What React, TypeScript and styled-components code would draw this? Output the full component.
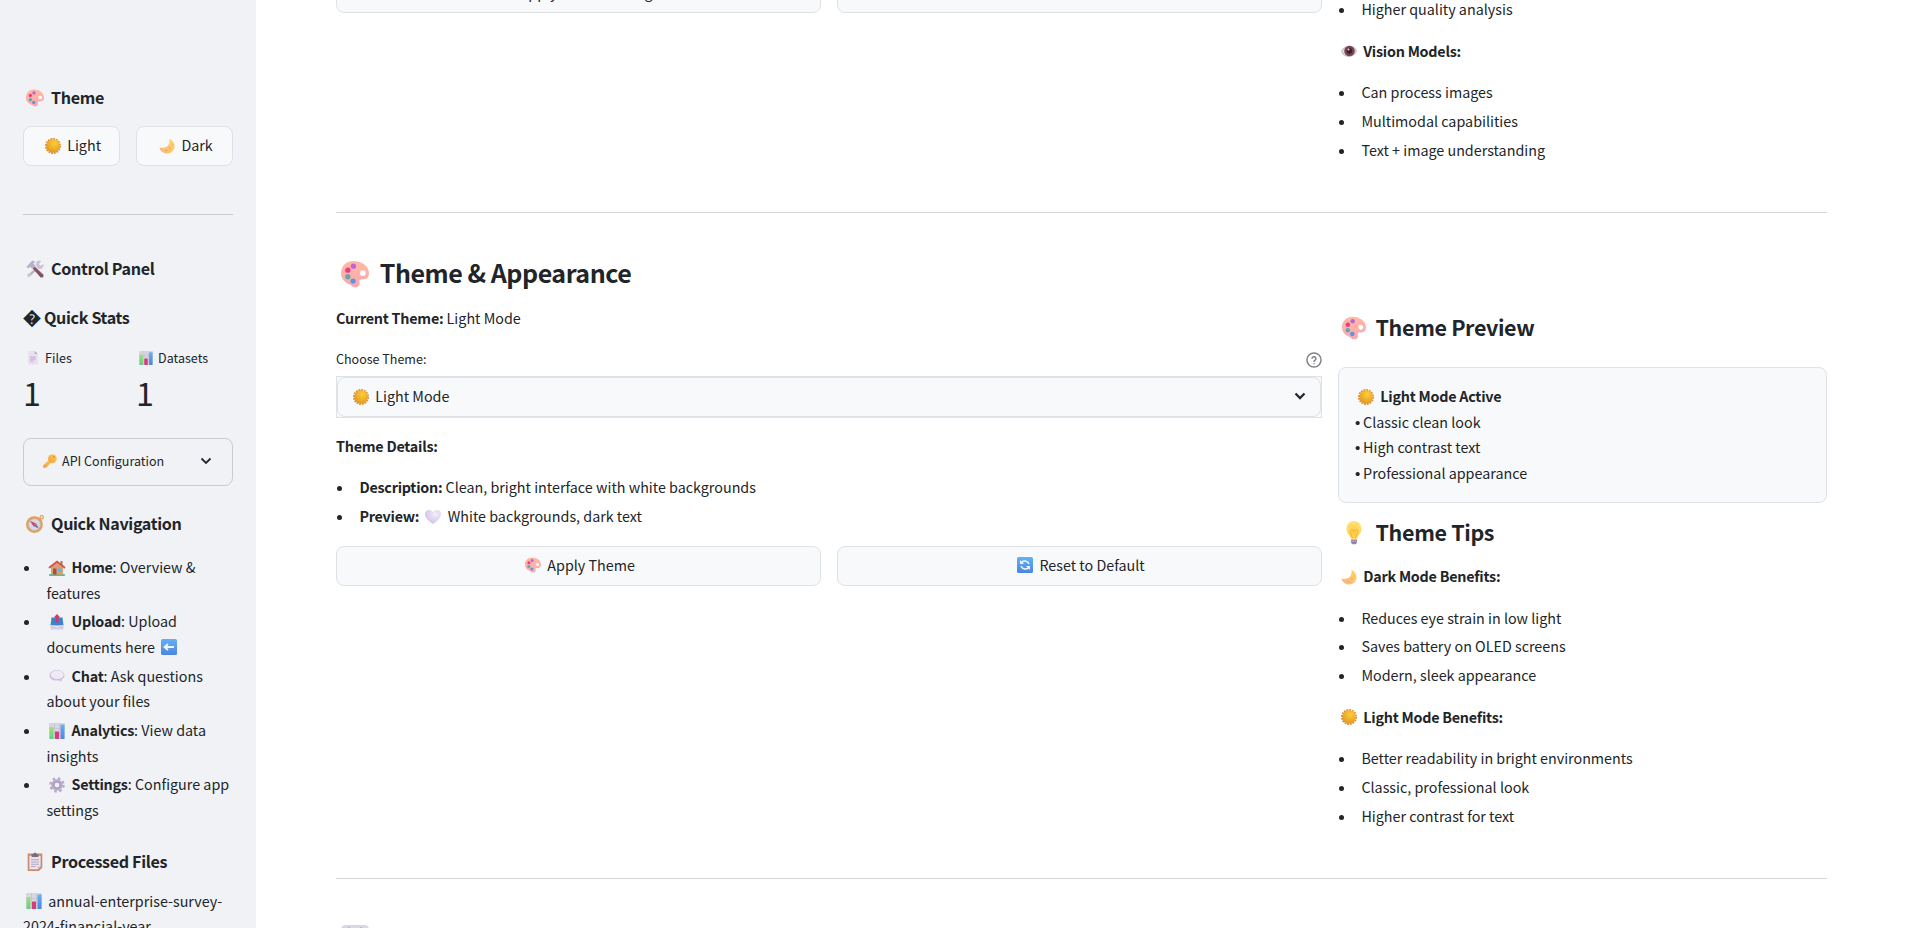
import React from 'react';
import styled, { createGlobalStyle, css } from 'styled-components';

const K = 0.8953;
const size = (px: number) => `${(px * K).toFixed(3)}px`;

const Global = createGlobalStyle`
  *, *::before, *::after { box-sizing: border-box; }
  html, body { margin: 0; padding: 0; height: 100%; overflow: hidden; background: #ffffff; }
  body {
    font-family: "Noto Sans CJK SC", "Noto Sans CJK JP", "Liberation Sans", sans-serif;
    font-size: ${size(16)};
    line-height: 25.6px;
    color: #212529;
  }
  h2, h3, h4, p, ul { margin: 0; padding: 0; font-weight: 400; }
  strong { font-weight: 600; letter-spacing: -0.016em; }
`;

const Page = styled.div`
  display: flex;
  width: 100%;
  height: 928px;
  overflow: hidden;
`;

const Sidebar = styled.aside`
  flex: 0 0 256px;
  height: 928px;
  padding: 85px 23px 0;
  overflow: hidden;
  background: #f0f2f6;
`;

const Main = styled.main`
  flex: 1;
  height: 928px;
  padding: 0 93px 0 80px;
  overflow: hidden;
`;

const Icon = styled.svg`
  display: inline-block;
  width: 1.117em;
  height: 1.117em;
  margin: 0 0.215em 0 0.205em;
  vertical-align: -0.18em;
  overflow: visible;
`;

const SideTitle = styled.h4<{ $top?: number }>`
  margin-top: ${(p) => p.$top ?? 0}px;
  height: 24px;
  font-size: ${size(18)};
  line-height: 24px;
  font-weight: 600;
  letter-spacing: -0.021em;
  white-space: nowrap;
`;

const Replacement = styled.span`
  font-size: 18px;
  line-height: 0;
`;

const Title = styled.h2`
  margin-top: 42px;
  height: 34px;
  font-size: ${size(28)};
  line-height: 34px;
  font-weight: 600;
  letter-spacing: -0.019em;
`;

const SubTitle = styled.h3<{ $top: number }>`
  margin-top: ${(p) => p.$top}px;
  height: 30px;
  font-size: ${size(24)};
  line-height: 30px;
  font-weight: 600;
  letter-spacing: -0.016em;
`;

const Text = styled.p<{ $top?: number }>`
  margin-top: ${(p) => p.$top ?? 0}px;
  line-height: 25.6px;
`;

const Rule = styled.hr<{ $top?: number }>`
  height: 1px;
  margin: ${(p) => p.$top ?? 0}px 0 0;
  border: 0;
  background: rgba(49, 51, 63, 0.2);
`;

const ButtonRow = styled.div<{ $top?: number }>`
  display: grid;
  grid-template-columns: 1fr 1fr;
  gap: 16px;
  margin-top: ${(p) => p.$top ?? 0}px;
`;

const Button = styled.button<{ $indent?: number }>`
  display: flex;
  align-items: center;
  justify-content: center;
  height: 40px;
  padding: 0 12px 2px ${(p) => 12 + (p.$indent ?? 0)}px;
  border: 1px solid #dee2e6;
  border-radius: 8px;
  background: #f8f9fb;
  color: inherit;
  font: inherit;
  line-height: 25.6px;
  white-space: nowrap;
`;

const Metrics = styled.div`
  display: grid;
  grid-template-columns: 1fr 1fr;
  gap: 16px;
  margin-top: 19px;
`;

const small = css`
  font-size: ${size(14)};
  line-height: 20px;
`;

const MetricLabel = styled.div`
  ${small}
  white-space: nowrap;
`;

const MetricValue = styled.div`
  margin-top: 2px;
  height: 44px;
  font-size: ${size(36)};
  line-height: 44px;
`;

const Expander = styled.div`
  ${small}
  display: flex;
  align-items: center;
  justify-content: space-between;
  height: 48px;
  margin-top: 24px;
  padding: 0 20px 2px 16px;
  border: 1px solid rgba(49, 51, 63, 0.2);
  border-radius: 8px;
`;

const List = styled.ul<{ $top?: number }>`
  display: flex;
  flex-direction: column;
  gap: 3.2px;
  margin-top: ${(p) => p.$top ?? 0}px;
  list-style: none;
`;

const Item = styled.li`
  display: grid;
  grid-template-columns: 23.4px 1fr;
  &::before {
    content: '';
    width: 5px;
    height: 5px;
    margin: 12px 0 0 1px;
    border-radius: 50%;
    background: #212529;
  }
`;

const Columns = styled.div<{ $top?: number }>`
  display: grid;
  grid-template-columns: 986px 489px;
  gap: 16px;
  margin-top: ${(p) => p.$top ?? 0}px;
`;

const TopColumns = styled(Columns)`
  height: 212px;
`;

const LabelRow = styled.div`
  ${small}
  display: flex;
  justify-content: space-between;
  align-items: flex-end;
  margin-top: 18px;
`;

const SelectFrame = styled.div`
  height: 42px;
  margin-top: 7px;
  border: 1px solid #dee2e6;
  background: #f8f9fb;
`;

const SelectInner = styled.div`
  display: flex;
  align-items: center;
  justify-content: space-between;
  height: 40px;
  padding: 0 14px 1px 12px;
  border: 1px solid #dee2e6;
  border-radius: 8px;
`;

const Card = styled.div`
  height: 136px;
  margin-top: 25px;
  padding: 15px 16px;
  border: 1px solid #dee2e6;
  border-radius: 8px;
  background: #f8f9fb;
`;

const Dot = styled.span`
  font-family: "Liberation Sans", sans-serif;
  font-size: 15px;
  line-height: 0;
  letter-spacing: -0.4px;
`;

const gradients = (
  <svg width="0" height="0" style={{ position: 'absolute' }} aria-hidden="true">
    <defs>
      <radialGradient id="gSun" cx=".6" cy=".3" r=".75"><stop offset="0" stopColor="#ffce33" /><stop offset="1" stopColor="#dd9528" /></radialGradient>
      <linearGradient id="gMoon" x1="1" y1="0" x2="0" y2="1"><stop offset="0" stopColor="#ffd65c" /><stop offset="1" stopColor="#f7b585" /></linearGradient>
      <linearGradient id="gPal" x1="0" y1="0" x2="0" y2="1"><stop offset="0" stopColor="#ffb9a2" /><stop offset="1" stopColor="#f9a9b0" /></linearGradient>
      <linearGradient id="gGreen" x1="0" y1="0" x2="0" y2="1"><stop offset="0" stopColor="#a5e06f" /><stop offset="1" stopColor="#5fd08c" /></linearGradient>
      <linearGradient id="gBlue" x1="0" y1="0" x2="0" y2="1"><stop offset="0" stopColor="#64b1f5" /><stop offset="1" stopColor="#4b86df" /></linearGradient>
      <linearGradient id="gPaper" x1="0" y1="0" x2="0" y2="1"><stop offset="0" stopColor="#e6e2ec" /><stop offset="1" stopColor="#eadcf3" /></linearGradient>
      <linearGradient id="gKey" x1="1" y1="0" x2="0" y2="1"><stop offset="0" stopColor="#ffd047" /><stop offset="1" stopColor="#f19a4c" /></linearGradient>
      <radialGradient id="gHeart" cx=".65" cy=".3" r=".8"><stop offset="0" stopColor="#f3effa" /><stop offset="1" stopColor="#cfb9e6" /></radialGradient>
      <radialGradient id="gBulb" cx=".5" cy=".6" r=".6"><stop offset="0" stopColor="#ffca3c" /><stop offset="1" stopColor="#ffe17b" /></radialGradient>
    </defs>
  </svg>
);

const art: Record<string, React.ReactNode> = {
  palette: (
    <>
      <path d="M14 1C6 1 0 7 0 15c0 7 5 11 10 13 3 1 2 3 6 3 5 0 6-3 5-6-.6-2 .5-3 3-3 4 0 8-1 8-7C32 7 24 1 14 1z" fill="url(#gPal)" />
      <circle cx="25" cy="15" r="3.2" fill="#fff" />
      <circle cx="14.200" cy="7" r="3" fill="#bd63dc" />
      <circle cx="7.800" cy="11.600" r="3" fill="#ea3c86" />
      <circle cx="7.800" cy="19" r="3" fill="#5fa9ac" />
      <circle cx="13.800" cy="24" r="3" fill="#6492de" />
    </>
  ),
  sun: (
    <>
      <circle cx="16" cy="16" r="14" fill="none" stroke="#e58b33" strokeWidth="4" strokeDasharray="3.6 1.9" />
      <circle cx="16" cy="16" r="13.700" fill="url(#gSun)" />
    </>
  ),
  moon: (
    <>
      <path d="M21 2c1 7-1 12-5 15-5 3.500-11 3-15 2 1 7 8 12 15 12 9 0 15-7 15-14C31 10 27 4 21 2z" fill="url(#gMoon)" />
      <circle cx="22" cy="20" r="1.500" fill="#e59c4d" /><circle cx="15" cy="25" r="1.600" fill="#e59c4d" /><circle cx="27" cy="14" r="1" fill="#e59c4d" />
    </>
  ),
  tools: (
    <>
      <path d="M17 14l-14 13 3 3 14-13z" fill="#b9b0c7" />
      <path d="M19 3c3-3 7-2 8-1l-4 5 3 3 5-3c1 5-2 9-7 9-5-1-8-7-5-13z" fill="#cbc3d8" />
      <path d="M5 23l4 4-4 4-4-4z" fill="#cfc7da" />
      <path d="M1 12L11 1l6 2-4 3 4 4-5 6-5-4-3 3z" fill="#b9afc9" />
      <path d="M12 15l4-3 15 14c1 4-2 6-5 5z" fill="#83505f" />
      <path d="M17 14l11 10" stroke="#a67987" strokeWidth="1.500" />
    </>
  ),
  file: (
    <>
      <path d="M5 0h15l7 7v24H5z" fill="url(#gPaper)" />
      <path d="M20 0l7 7h-7z" fill="#b9a9c9" />
      <path d="M9 14h13M9 18.500h13M9 23h8" stroke="#b5a5c4" strokeWidth="2" />
    </>
  ),
  chart: (
    <>
      <rect width="32" height="32" rx="2" fill="#d9d5e2" />
      <path d="M11 0v32M21 0v32M0 11h32M0 21h32" stroke="#bdb6ca" strokeWidth="1" />
      <rect x="1" y="8" width="8" height="24" rx="1" fill="url(#gGreen)" />
      <rect x="12" y="17" width="8" height="15" rx="1" fill="#d93b79" />
      <rect x="23" y="3" width="8" height="29" rx="1" fill="url(#gBlue)" />
    </>
  ),
  key: (
    <>
      <path d="M14 13l6 6L7 31l-6 1-1-6z" fill="url(#gKey)" />
      <circle cx="21.500" cy="10.500" r="10" fill="url(#gKey)" />
      <circle cx="25" cy="7" r="1.800" fill="#c37a35" />
      <path d="M7 27l2.500 2.500" stroke="#dd8840" strokeWidth="1.500" />
    </>
  ),
  compass: (
    <>
      <circle cx="28" cy="4" r="3" fill="none" stroke="#e0a04a" strokeWidth="2" />
      <circle cx="15" cy="17" r="13" fill="#dcd5e2" stroke="#e2a055" strokeWidth="4" />
      <circle cx="15" cy="17" r="10.500" fill="none" stroke="#c3a2ad" />
      <path d="M7 10l11 5-5 5z" fill="#cb4a6b" /><path d="M23 24l-5-9-5 5z" fill="#77799b" />
    </>
  ),
  house: (
    <>
      <rect x="0" y="28" width="32" height="4" rx="1.500" fill="#54c389" />
      <path d="M4 13L16 4l12 9v16H4z" fill="#dd9f72" />
      <rect x="23" y="2" width="4" height="9" fill="#b86f50" />
      <path d="M1 15L16 3l15 12" fill="none" stroke="#cf5346" strokeWidth="3.500" strokeLinecap="round" />
      <rect x="8" y="17" width="7" height="12" fill="#9b5546" />
      <rect x="18" y="17" width="7" height="7" fill="#66b5e8" />
    </>
  ),
  outbox: (
    <>
      <path d="M5 7h22l2 16H3z" fill="#3d82cd" />
      <path d="M3 22h8l2 4h6l2-4h8v9H3z" fill="#d7cde2" />
      <path d="M16 0l6.500 7H19v10h-6V7H9.500z" fill="#d33868" />
    </>
  ),
  left: (
    <>
      <rect width="32" height="32" rx="3" fill="url(#gBlue)" />
      <path d="M26 16H8M14 10l-7 6 7 6" fill="none" stroke="#f2f7ff" strokeWidth="3.600" />
    </>
  ),
  bubble: (
    <>
      <path d="M16 4C7 4 1 9 1 15s6 10 13 10h7l4 3v-5c4-2 6-5 6-8 0-6-6-11-15-11z" fill="#cdbfdd" />
      <ellipse cx="16.500" cy="13.500" rx="13" ry="8.500" fill="#eee9f4" />
    </>
  ),
  gear: (
    <>
      <circle cx="16" cy="16" r="13" fill="none" stroke="#b9abcc" strokeWidth="5" strokeDasharray="5.100 5.110" />
      <circle cx="16" cy="16" r="8.500" fill="none" stroke="#b9abcc" strokeWidth="6" />
      <circle cx="16" cy="16" r="6" fill="none" stroke="#94869f" strokeWidth="1.500" />
    </>
  ),
  clipboard: (
    <>
      <path d="M3 1h26v25l-6 6H3z" fill="#cd8b69" />
      <path d="M6 5h20v19l-5 5H6z" fill="#eae2f0" />
      <path d="M21 29v-5h5z" fill="#c1b0cf" />
      <path d="M10 2h3c1-3 5-3 6 0h3v5H10z" fill="#776c7c" />
      <path d="M9 12h14M9 16h14M9 20h14M9 24h8" stroke="#a99bb7" strokeWidth="1.500" />
    </>
  ),
  heart: <path d="M16 30C6 23 0 17 0 10 0 1 12-1 16 6c4-7 16-5 16 4 0 7-6 13-16 20z" fill="url(#gHeart)" />,
  refresh: (
    <>
      <rect width="32" height="32" rx="3" fill="url(#gBlue)" />
      <path d="M8 12c4-6 13-5 16 2M24 20c-4 6-13 5-16-2" fill="none" stroke="#eef5ff" strokeWidth="3.200" />
      <path d="M6 6v8h8zM26 26v-8h-8z" fill="#eef5ff" />
    </>
  ),
  eye: (
    <>
      <path d="M0 17C4 3 28 1 32 16 28 31 4 32 0 17z" fill="#cfc4da" />
      <path d="M3 17C7 7 25 6 29 16 25 26 7 27 3 17z" fill="#e3dbe8" />
      <circle cx="17" cy="16" r="10.500" fill="#7c4249" />
      <circle cx="17" cy="16" r="5.500" fill="#35222d" />
      <circle cx="15" cy="13" r="2" fill="#e5d5da" />
    </>
  ),
  bulb: (
    <>
      <path d="M16 0C9 0 6 5 6 11c0 6 5 8 6 13h8c1-5 6-7 6-13 0-6-3-11-10-11z" fill="url(#gBulb)" />
      <path d="M14 23l-3-9c0-3 4-3 5 0 1-3 5-3 5 0l-3 9" fill="none" stroke="#f4ad2c" strokeWidth="1.200" />
      <path d="M12 24.500h8V29l-2 2h-4l-2-2z" fill="#9480ad" />
      <path d="M12 27h8" stroke="#b9a8cc" strokeWidth="1.200" />
    </>
  ),
  panel: (
    <>
      <rect width="32" height="31" rx="5" fill="#dcd7e7" />
      <circle cx="9" cy="3.500" r="1" fill="#a193ab" /><circle cx="23" cy="3.500" r="1" fill="#a193ab" />
    </>
  ),
};

const Emoji = ({ name }: { name: string }) => (
  <Icon viewBox="0 0 32 32" aria-hidden="true">{art[name]}</Icon>
);

const Chevron = ({ weight = 1.8 }: { weight?: number }) => (
  <svg width="12" height="8" viewBox="0 0 12 8" fill="none" aria-hidden="true">
    <path d="M1.500 1.500L6 6l4.500-4.500" stroke="#262730" strokeWidth={weight} />
  </svg>
);

const Help = styled.svg`
  display: block;
  width: 16px;
  height: 16px;
  margin-bottom: 1px;
`;

const HelpIcon = () => (
  <Help viewBox="0 0 24 24" fill="none" stroke="#808289" strokeWidth="2.200" strokeLinecap="round" aria-hidden="true">
    <circle cx="12" cy="12" r="10.600" />
    <path d="M9 9.200a3.100 3.100 0 0 1 6 1c0 2-3 2.600-3 4M12 17.500v.1" />
  </Help>
);

const navigation = [
  { icon: 'house', name: 'Home', text: 'Overview & features' },
  { icon: 'outbox', name: 'Upload', text: 'Upload documents here ', tail: 'left' },
  { icon: 'bubble', name: 'Chat', text: 'Ask questions about your files' },
  { icon: 'chart', name: 'Analytics', text: 'View data insights' },
  { icon: 'gear', name: 'Settings', text: 'Configure app settings' },
];

const Bullets = ({ items, top = 16 }: { items: string[]; top?: number }) => (
  <List $top={top}>
    {items.map((t) => <Item key={t}><span>{t}</span></Item>)}
  </List>
);

export default function App() {
  return (
    <>
      <Global />
      {gradients}
      <Page>
        <Sidebar>
          <SideTitle><Emoji name="palette" /> Theme</SideTitle>
          <ButtonRow $top={17}>
            <Button><span><Emoji name="sun" /> Light</span></Button>
            <Button><span><Emoji name="moon" /> Dark</span></Button>
          </ButtonRow>
          <Rule $top={48} />
          <SideTitle $top={41}><Emoji name="tools" /> Control Panel</SideTitle>
          <SideTitle $top={25}><Replacement>�</Replacement> Quick Stats</SideTitle>
          <Metrics>
            <div>
              <MetricLabel><Emoji name="file" /> Files</MetricLabel>
              <MetricValue>1</MetricValue>
            </div>
            <div>
              <MetricLabel><Emoji name="chart" /> Datasets</MetricLabel>
              <MetricValue>1</MetricValue>
            </div>
          </Metrics>
          <Expander>
            <span><Emoji name="key" /> API Configuration</span>
            <Chevron />
          </Expander>
          <SideTitle $top={25}><Emoji name="compass" /> Quick Navigation</SideTitle>
          <List $top={18.95}>
            {navigation.map((n) => (
              <Item key={n.name}>
                <span>
                  <Emoji name={n.icon} /> <strong>{n.name}</strong>: {n.text}
                  {n.tail && <Emoji name={n.tail} />}
                </span>
              </Item>
            ))}
          </List>
          <SideTitle $top={26.05}><Emoji name="clipboard" /> Processed Files</SideTitle>
          <Text $top={15}><Emoji name="chart" /> annual-enterprise-survey-2024-financial-year</Text>
        </Sidebar>

        <Main>
          <TopColumns>
            <ButtonRow $top={-27}>
              <Button $indent={22}>Apply Model Settings</Button>
              <Button $indent={22}>Reset to Default</Button>
            </ButtonRow>
            <div>
              <Bullets top={-4} items={['Higher quality analysis']} />
              <Text $top={16}><Emoji name="eye" /> <strong>Vision Models:</strong></Text>
              <Bullets items={['Can process images', 'Multimodal capabilities', 'Text + image understanding']} />
            </div>
          </TopColumns>
          <Rule />
          <Title><Emoji name="palette" /> Theme &amp; Appearance</Title>
          <Columns $top={16}>
            <div>
              <Text><strong>Current Theme:</strong> Light Mode</Text>
              <LabelRow><span>Choose Theme:</span><HelpIcon /></LabelRow>
              <SelectFrame>
                <SelectInner>
                  <span><Emoji name="sun" /> Light Mode</span>
                  <Chevron weight={2.3} />
                </SelectInner>
              </SelectFrame>
              <Text $top={15}><strong>Theme Details:</strong></Text>
              <List $top={16}>
                <Item><span><strong>Description:</strong> Clean, bright interface with white backgrounds</span></Item>
                <Item><span><strong>Preview:</strong> <Emoji name="heart" /> White backgrounds, dark text</span></Item>
              </List>
              <ButtonRow $top={17}>
                <Button><span><Emoji name="palette" /> Apply Theme</span></Button>
                <Button><span><Emoji name="refresh" /> Reset to Default</span></Button>
              </ButtonRow>
            </div>
            <div>
              <SubTitle $top={7}><Emoji name="palette" /> Theme Preview</SubTitle>
              <Card>
                <div><Emoji name="sun" /> <strong>Light Mode Active</strong></div>
                <div><Dot>•</Dot> Classic clean look</div>
                <div><Dot>•</Dot> High contrast text</div>
                <div><Dot>•</Dot> Professional appearance</div>
              </Card>
              <SubTitle $top={14}><Emoji name="bulb" /> Theme Tips</SubTitle>
              <Text $top={16}><Emoji name="moon" /> <strong>Dark Mode Benefits:</strong></Text>
              <Bullets items={['Reduces eye strain in low light', 'Saves battery on OLED screens', 'Modern, sleek appearance']} />
              <Text $top={16}><Emoji name="sun" /> <strong>Light Mode Benefits:</strong></Text>
              <Bullets items={['Better readability in bright environments', 'Classic, professional look', 'Higher contrast for text']} />
            </div>
          </Columns>
          <Rule $top={49} />
          <Title><Emoji name="panel" /></Title>
        </Main>
      </Page>
    </>
  );
}
